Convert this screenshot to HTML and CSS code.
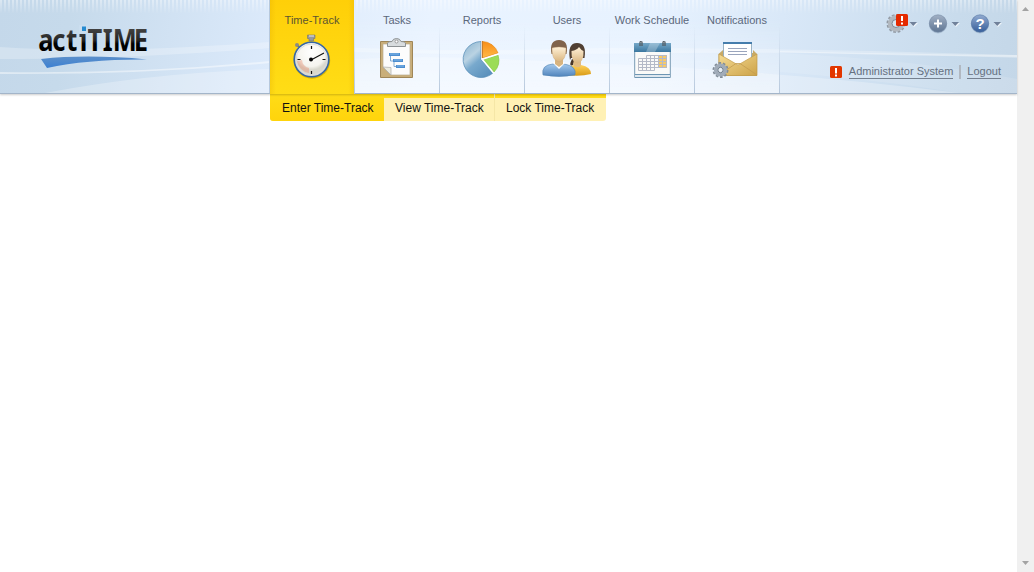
FILE: index.html
```html
<!DOCTYPE html>
<html lang="en">
<head>
<meta charset="utf-8">
<title>actiTIME - Enter Time-Track</title>
<link rel="stylesheet" href="styles.css">
</head>
<body>
<div class="page">
<main class="content">
<header class="header">
  <svg class="waves" viewBox="0 0 1017 93" preserveAspectRatio="none">
    <path d="M0 47Q110 54 270 42Q400 54 600 48Q810 48 1017 55V58Q820 50 600 54Q400 56 270 48Q120 60 0 59Z" fill="#fff" opacity=".25"/>
    <path d="M0 72Q140 74 270 61V63Q140 75 0 74Z" fill="#fff" opacity=".45"/>
    <path d="M45 93Q150 73 270 69Q370 50 560 62Q780 70 960 93Z" fill="#fff" opacity=".26"/>
    <path d="M780 51Q900 54 1017 55V57Q900 56 780 52Z" fill="#fff" opacity=".35"/>
    <path d="M780 53Q920 60 1017 79V93H960Q880 80 780 72Z" fill="#fff" opacity=".12"/>
  </svg>
  <div class="brand">
    <svg class="logo" width="130" height="66" viewBox="30 8 130 66">
      <defs>
        <linearGradient id="ink" gradientUnits="userSpaceOnUse" x1="0" y1="-23" x2="0" y2="0"><stop stop-color="#454545"/><stop offset=".55" stop-color="#242424"/><stop offset=".7" stop-color="#000"/></linearGradient>
        <linearGradient id="swoosh" x2="0" y2="1"><stop stop-color="#5b8fca"/><stop offset="1" stop-color="#3c80d2"/></linearGradient>
      </defs>
      <g transform="translate(39 50.7) scale(.85 1)"><text class="logo-text" x="-1 15.5 32 47.800 57 75 86.800 111.400" y="0" fill="url(#ink)">actiTIME</text></g>
      <path d="M79 25H87.500V33H79Z" fill="#cbdeef"/>
      <path d="M82 26.500H86V31H82Z" fill="#278bd0"/>
      <path d="M79.500 34H83V37H79.500Z" fill="#353535"/>
      <path d="M41 59Q88 54 147 59.500Q88 59 47 68Z" fill="url(#swoosh)"/>
    </svg>
  </div>
  <nav class="tabs">
    <a class="tab active"><span>Time-Track</span>
      <svg class="icon" viewBox="284 32 56 52">
        <defs><radialGradient id="dial" cy=".3"><stop stop-color="#fff"/><stop offset=".8" stop-color="#f5f4ee"/><stop offset="1" stop-color="#d9d8cd"/></radialGradient></defs>
        <path d="M307.500 35H315V38.500H313.500V41H309V38.500H307.500Z" fill="#999" stroke="#747474" stroke-width=".6"/><path d="M309 36H314" stroke="#e9e9e9"/>
        <circle cx="297" cy="45" r="2" fill="#8d8c81"/><path d="M298 46L300 48" stroke="#777" stroke-width="2"/>
        <circle cx="312" cy="60.500" r="18.200" fill="#aa8900" opacity=".5"/>
        <circle cx="311.500" cy="59.500" r="17.300" fill="url(#dial)" stroke="#3667a5" stroke-width="1.600"/>
        <circle cx="311.500" cy="59.500" r="15.500" fill="none" stroke="#ddd" />
        <path d="M297 61A14 14 0 0 0 309 73V68A9 9 0 0 1 302 60Z" fill="#e78262" opacity=".35"/>
        <path d="M311.500 46V49M311.500 71V74M297.500 59.500H300.500M322.500 59.500H325.500M311 60L324 53" stroke="#111" stroke-width="1.200"/><circle cx="311" cy="59.500" r="2" fill="#050505"/>
      </svg>
    </a>
    <a class="tab"><span>Tasks</span>
      <svg class="icon" viewBox="369 32 56 52">
        <path d="M380.500 41.500H412.500V77.500H380.500Z" fill="#c9ae79" stroke="#9f8658"/>
        <path d="M383 44H410V75H391L383 67V44Z" fill="#fcfcfc" stroke="#b9ad91" stroke-width=".7"/><path d="M383 67L391 75V67.500Z" fill="#ececdf" stroke="#aaa" stroke-width=".7"/>
        <path d="M387.500 46.500V43Q388 41.500 392 41.500Q393 38.500 396.500 38.500Q400 38.500 401 41.500Q405 41.500 405.500 43V46.500Z" fill="#d8dcde" stroke="#8d9294"/><circle cx="396.500" cy="41.500" r="1.500" fill="#fff" stroke="#999"/>
        <path d="M390.500 55V61H394V66.500H398" fill="none" stroke="#82add5"/><path d="M389 54.500H400M393 60.500H403M396 66.500H405" stroke="#4d8ed0" stroke-width="3"/><path d="M390 54H399M394 60H402M397 66H404" stroke="#84b8e8"/>
      </svg>
    </a>
    <a class="tab"><span>Reports</span>
      <svg class="icon" viewBox="454 32 56 52">
        <defs><linearGradient id="pieBlue" x2=".7" y2="1"><stop stop-color="#87b1ce"/><stop offset=".4" stop-color="#bad3e3"/><stop offset=".6" stop-color="#78a9cd"/><stop offset="1" stop-color="#5c92bd"/></linearGradient><linearGradient id="pieOrange" x2="0" y2="1"><stop stop-color="#f78d16"/><stop offset="1" stop-color="#ffba48"/></linearGradient></defs>
        <path d="M481 59.500V41.500A18 18 0 1 0 493 73Z" fill="url(#pieBlue)" stroke="#5289b4" stroke-width=".7"/>
        <path d="M482.500 58V41.500A17 17 0 0 1 498 53Z" fill="url(#pieOrange)" stroke="#e88712" stroke-width=".7"/>
        <path d="M483 59.500L498 55A17 17 0 0 1 494 72Z" fill="#9bdc57" stroke="#83c342" stroke-width=".7"/><path d="M482 41V59L493.500 73M483 59L498.500 54" stroke="#fff" stroke-width="1.500" fill="none"/><path d="M482.300 41V58" stroke="#bf6500"/>
      </svg>
    </a>
    <a class="tab"><span>Users</span>
      <svg class="icon" viewBox="539 32 56 52">
        <defs><linearGradient id="face" x2="0" y2="1"><stop stop-color="#fff1d7"/><stop offset="1" stop-color="#d9b47e"/></linearGradient><linearGradient id="shirt" x2="0" y2="1"><stop stop-color="#a4c9ed"/><stop offset="1" stop-color="#4f83bc"/></linearGradient><linearGradient id="gold" x2="0" y2="1"><stop stop-color="#ffd15b"/><stop offset="1" stop-color="#d99b16"/></linearGradient></defs>
        <path d="M566 75Q563 66 575 65H581Q591 67 591 74Q580 77 566 75Z" fill="url(#gold)"/>
        <path d="M572 59Q568 67 573 65L575 60Z" fill="#493628"/><path d="M574 59H581V66Q577 69 573 65Z" fill="#e0bb84"/>
        <path d="M570 60Q567 43 577 43Q587 43 584.500 58H571Z" fill="#514033"/><path d="M571.500 51Q577 50 579 47Q581 50 583.500 51Q584 62 577.500 63.500Q571 62 571.500 51Z" fill="url(#face)"/>
        <path d="M543 75Q541 65 553 64H564Q577 66 575 75Q559 78 543 75Z" fill="url(#shirt)" stroke="#5484b2" stroke-width=".6"/><path d="M553 63L559 69L565 63L562 61H555Z" fill="#fff"/><path d="M555 58H563V64L559 67L555 64Z" fill="#d8b47f"/>
        <path d="M551.500 54Q549 40 559 40Q569 40 566.500 54Z" fill="#80634b"/><path d="M552 48Q559 46 566 48Q566.500 60 559 62Q551.500 60 552 48Z" fill="url(#face)" stroke="#caa579" stroke-width=".4"/>
      </svg>
    </a>
    <a class="tab"><span>Work Schedule</span>
      <svg class="icon" viewBox="624 32 56 52">
        <defs><linearGradient id="calendar" x2="0" y2="1"><stop stop-color="#76a9c9"/><stop offset="1" stop-color="#3c779f"/></linearGradient></defs>
        <path d="M634.500 44H670.500V77.500H634.500Z" fill="#dfe8ef" stroke="#90adc2"/><path d="M636 51H669V74H636Z" fill="#fafaf8"/><path d="M634 43H671V52H634Z" fill="url(#calendar)"/><path d="M650 43L646 52H655L660 43Z" fill="#fff" opacity=".25"/>
        <path d="M640 46V42Q640.500 41 642 42V46M663 46V42Q663.500 41 665 42V46" fill="none" stroke="#4e555a" stroke-width="1.200"/>
        <path d="M659 55H667V68H659Z" fill="#f9ca65"/>
        <path d="M646.500 55.500H666.500M638.500 58.500H666.500M638.500 61.500H666.500M638.500 64.500H666.500M638.500 67.500H666.500M638.500 70.500H654.500M638.500 58.500V70.500M642.500 58.500V70.500M646.500 55.500V70.500M650.500 55.500V70.500M654.500 55.500V70.500M658.500 55.500V67.500M662.500 55.500V67.500M666.500 55.500V67.500" stroke="#b5bac7" fill="none"/>
        <path d="M635 74.500H670M635 77.500H670" stroke="#6e96b3"/>
      </svg>
    </a>
    <a class="tab"><span>Notifications</span>
      <svg class="icon" viewBox="709 32 56 52">
        <defs><linearGradient id="mail" x2="1" y2="1"><stop stop-color="#f5dc95"/><stop offset="1" stop-color="#cda349"/></linearGradient></defs>
        <path d="M718.500 54L723 50V53H753V50L757 54V76H718.500Z" fill="#c8aa67"/>
        <path d="M723.500 42.500H751.500V63L738 69L723.500 61Z" fill="#fff" stroke="#9ab2c3"/><path d="M723 43H752" stroke="#457dac" stroke-width="2"/><path d="M728 48.500H747M728 51.500H747M728 54.500H747" stroke="#9aa5bd"/>
        <path d="M719 54L738 65L757 54V75.500H719Z" fill="url(#mail)" stroke="#c29c4b" stroke-width=".7"/><path d="M719 75L736 63.500H740L757 75" fill="none" stroke="#c49c4f" stroke-width=".8"/>
        <circle cx="720.500" cy="70" r="7" fill="none" stroke="#818c98" stroke-width="2" stroke-dasharray="2.600 1.798"/><circle cx="720.500" cy="70" r="4.800" fill="#e7edf3" stroke="#a0abb8" stroke-width="3.600"/><circle cx="720.500" cy="70" r="2.700" fill="#e6edf4" stroke="#667482"/>
      </svg>
    </a>
  </nav>
  <div class="account">
    <svg class="tools" width="124" height="28" viewBox="880 8 124 28">
      <defs><linearGradient id="greyDisk" x2="0" y2="1"><stop stop-color="#a1b0c4"/><stop offset="1" stop-color="#5f7694"/></linearGradient><linearGradient id="blueDisk" x2="0" y2="1"><stop stop-color="#92abd0"/><stop offset="1" stop-color="#365e9a"/></linearGradient></defs>
      <circle cx="896" cy="23.500" r="8.500" fill="none" stroke="#929aa4" stroke-width="2" stroke-dasharray="2.700 1.750"/><circle cx="896" cy="23.500" r="6" fill="none" stroke="#b2b8bf" stroke-width="4.500"/><circle cx="896" cy="23.500" r="4" fill="#dae7f2" stroke="#7e8995"/>
      <rect x="896" y="14" width="12" height="12" rx="1.500" fill="#e52a00"/><path d="M902 16V21M902 22.500V24.500" stroke="#fff" stroke-width="2"/>
      <path d="M910 23H918L914 27ZM952 23H960L956 27ZM994 23H1002L998 27Z" fill="#fff" opacity=".7"/>
      <path d="M909.500 22H917L913.250 26ZM951.500 22H959L955.250 26ZM993.500 22H1001L997.250 26Z" fill="#70819a"/>
      <circle cx="938" cy="24.500" r="9" fill="#839bb7" opacity=".4"/><circle cx="938" cy="23.500" r="8.700" fill="url(#greyDisk)" stroke="#758aa5" stroke-width=".6"/><path d="M938 19.500V27.500M934 23.500H942" stroke="#fff" stroke-width="2"/>
      <circle cx="980" cy="24.500" r="9" fill="#839bb7" opacity=".4"/><circle cx="980" cy="23.500" r="8.700" fill="url(#blueDisk)" stroke="#5475a5" stroke-width=".6"/><text class="question" x="980" y="29" text-anchor="middle">?</text>
    </svg>
    <div class="session">
      <svg class="alert" width="12" height="12"><rect width="12" height="12" rx="1.500" fill="#e23600"/><path d="M6 2V7.500M6 8.500V10.500" stroke="#fff" stroke-width="2"/></svg>
      <a>Administrator System</a><i class="divider"></i><a>Logout</a>
    </div>
  </div>
</header>
<nav class="submenu"><a class="current">Enter Time-Track</a><a>View Time-Track</a><a>Lock Time-Track</a></nav>
</main>
<aside class="scrollbar"><svg width="17" height="17"><path d="M5 11H12L8.500 7Z" fill="#a3a3a3"/></svg><svg width="17" height="17"><path d="M5 6H12L8.500 10Z" fill="#a3a3a3"/></svg></aside>
</div>
</body>
</html>
```
FILE: styles.css
```css
* { box-sizing: border-box; }
body { margin: 0; background: #fff; font-family: "Liberation Sans", Arial, sans-serif; }
.page { display: flex; height: 572px; overflow: hidden; }
.content { flex: 1; }
.header {
  position: relative;
  isolation: isolate;
  display: flex;
  height: 94px;
  border-bottom: 1px solid #a3b5c9;
  background: linear-gradient(100deg, #c4d8ea 0%, #c6daeb 7%, #dceafb 27%, #e9f3ff 42%, #e7f2ff 63%, #d9e8f8 76%, #c8dbec 93%, #c4d7e8 100%);
  box-shadow: 0 1px 2px rgba(0, 0, 0, .2);
}
.header::before {
  content: "";
  position: absolute;
  z-index: -1;
  inset: 0 0 auto;
  height: 14px;
  background: repeating-linear-gradient(90deg, rgba(255,255,255,.4) 0 2px, transparent 2px 4px);
  -webkit-mask-image: linear-gradient(#000, transparent);
  mask-image: linear-gradient(#000, transparent);
}
.waves { position: absolute; z-index: -1; width: 100%; height: 93px; }
.brand { flex: none; width: 270px; padding: 8px 0 0 30px; border-right: 1px solid #b6c8dd; }
.logo { display: block; }
.logo-text { font: bold 30px "Noto Sans", "Open Sans", sans-serif; }
.tabs { display: flex; }
.tab {
  display: flex;
  flex-direction: column;
  align-items: center;
  width: 85px;
  height: 93px;
  padding-top: 13px;
  border-right: 1px solid;
  border-image: linear-gradient(transparent 28%, #b5c7dc) 1;
  background: linear-gradient(transparent 20%, rgba(255,255,255,.38));
  color: #5b687b;
  font-size: 11px;
  line-height: 14px;
  white-space: nowrap;
}
.tab.active { height: 94px; background: linear-gradient(90deg, rgba(224,166,0,.25), transparent 7%, transparent 93%, rgba(224,166,0,.25)), linear-gradient(#ffcf08, #ffdd16); background-clip: padding-box; color: #5c5531; }
.icon { width: 56px; height: 52px; margin-top: 5px; flex: none; }
.account { display: flex; flex-direction: column; align-items: flex-end; margin-left: auto; padding: 8px 13px 0 0; }
.tools { display: block; }
.question { font: bold 15px "Liberation Sans", sans-serif; fill: #fff; }
.session { display: flex; align-items: center; margin: 29px 3px 0 0; color: #657080; font-size: 11px; line-height: 13px; }
.session a { border-bottom: 1px solid #75808f; }
.alert { margin-right: 7px; }
.divider { width: 2px; height: 14px; margin: 0 6px; background: #b1b8c1; }
.submenu { display: flex; width: 336px; height: 27px; margin-left: 270px; border-radius: 0 0 3px 3px; overflow: hidden; background: linear-gradient(#ffd50c, #ffde1c 4px, #fff1b5 4px); font-size: 12px; line-height: 14px; color: #111; }
.submenu a { width: 111px; padding: 7px 0 0 11px; border-right: 1px solid #f5e6a6; white-space: nowrap; }
.submenu a:last-child { border-right: 0; }
.submenu .current { width: 114px; padding-left: 12px; background: linear-gradient(#ffdc17, #ffd40c); border: 0; }
.scrollbar { display: flex; flex-direction: column; justify-content: space-between; width: 17px; background: #f0f0f0; }
.scrollbar svg { display: block; }
```
